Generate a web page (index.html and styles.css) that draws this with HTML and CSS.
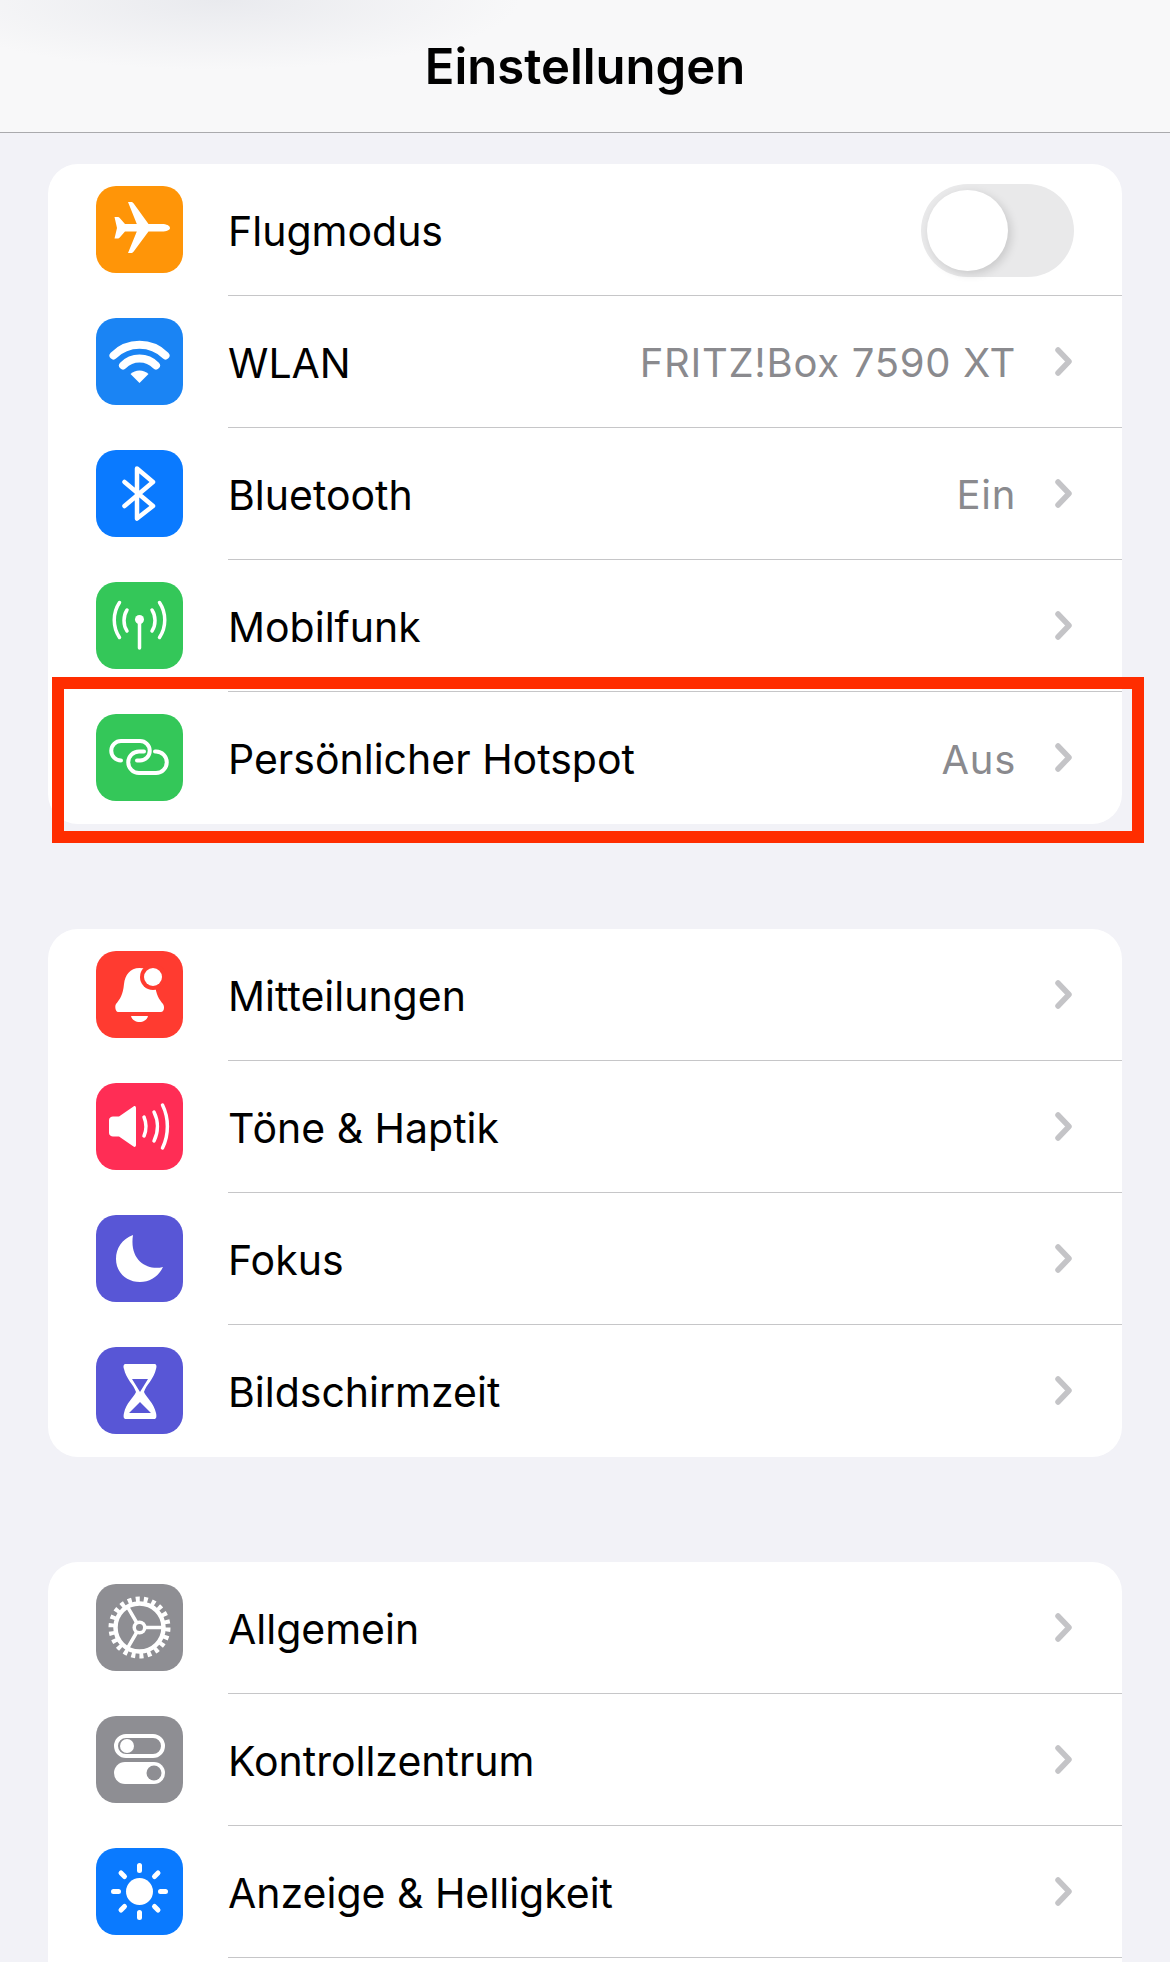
FILE: index.html
```html
<!DOCTYPE html>
<html lang="de">
<head>
  <meta charset="UTF-8">
  <title>Einstellungen</title>
  <meta name="viewport" content="width=device-width, initial-scale=1.0">
  <link rel="stylesheet" href="styles.css">
</head>
<body>

  <header class="nav-bar">
    <h1>Einstellungen</h1>
  </header>

  <main class="settings">

    <!-- Verbindungen -->
    <section class="card">
      <div class="row">
        <svg class="icon icon-orange" viewBox="0 0 87 87">
          <path class="fill" d="M74 42c0-2.400-3.600-4-8-4H52.500L37.500 17.200C36.800 16.300 36 16 35 16h-3l8.800 22H29l-5.500-6.300c-.4-.4-.8-.7-1.400-.7h-3.600l2.500 11-2.500 10.500h3.600c.6 0 1-.3 1.400-.7L29 45.500h11.800L32 67h3c1 0 1.800-.3 2.500-1.200L52.500 45.500H66c4.400 0 8-1.300 8-3.500z"/>
        </svg>
        <div class="row-body">
          <span class="label">Flugmodus</span>
          <span class="toggle"><span class="knob"></span></span>
        </div>
      </div>
      <div class="row">
        <svg class="icon icon-wifi" viewBox="0 0 87 87">
          <path class="line line-wifi" d="M17.500 37.500a37 37 0 0 1 52 0"/>
          <path class="line line-wifi" d="M27 47.500a23 23 0 0 1 33 0"/>
          <path class="fill" d="M43.500 65L34.500 56a13 13 0 0 1 18 0z"/>
        </svg>
        <div class="row-body">
          <span class="label">WLAN</span>
          <span class="value">FRITZ!Box 7590 XT</span>
          <svg class="chevron" viewBox="0 0 17 29"><path d="M3 3l11 11.500L3 26"/></svg>
        </div>
      </div>
      <div class="row">
        <svg class="icon icon-blue" viewBox="0 0 87 87">
          <path class="line line-bt" d="M28.500 32L57 56 41 68.500v-50L57 32 28.500 56"/>
        </svg>
        <div class="row-body">
          <span class="label">Bluetooth</span>
          <span class="value">Ein</span>
          <svg class="chevron" viewBox="0 0 17 29"><path d="M3 3l11 11.500L3 26"/></svg>
        </div>
      </div>
      <div class="row">
        <svg class="icon icon-green" viewBox="0 0 87 87">
          <path class="line line-thin" d="M23.500 20.500c-7 10.500-7 24.500 0 35M63.500 20.500c7 10.500 7 24.500 0 35"/>
          <path class="line line-thin" d="M31 28c-4 6-4 15 0 21M56 28c4 6 4 15 0 21"/>
          <circle class="fill" cx="43.500" cy="37.500" r="4.500"/>
          <path class="line line-thin" d="M43.500 38v28"/>
        </svg>
        <div class="row-body">
          <span class="label">Mobilfunk</span>
          <svg class="chevron" viewBox="0 0 17 29"><path d="M3 3l11 11.500L3 26"/></svg>
        </div>
      </div>
      <div class="row">
        <svg class="icon icon-green" viewBox="0 0 87 87">
          <path class="line line-link" d="M25 46.500a9.750 9.750 0 0 1 0-19.500H44a9.750 9.750 0 0 1 0 19.500h-3"/>
          <path class="line line-link" d="M59 37.500h1a10.750 10.750 0 0 1 0 21.500H43a10.750 10.750 0 0 1 0-21.500h5"/>
        </svg>
        <div class="row-body">
          <span class="label">Persönlicher Hotspot</span>
          <span class="value">Aus</span>
          <svg class="chevron" viewBox="0 0 17 29"><path d="M3 3l11 11.500L3 26"/></svg>
        </div>
        <div class="highlight"></div>
      </div>
    </section>

    <!-- Mitteilungen -->
    <section class="card">
      <div class="row">
        <svg class="icon icon-red" viewBox="0 0 87 87">
          <path class="fill" d="M43.500 17C34 17 29 24 28 33c-1 11-4 15-8 20-1.500 2-.5 8 2 8h43c3 0 4-5 2-8-4-5-7-9-8-20-1-9-6-16-15.500-16z"/>
          <path class="fill" d="M35 65h17c-1 4-5 6-8.500 6S36 69 35 65z"/>
          <circle class="dot-ring-red" cx="57" cy="26" r="13"/>
          <circle class="fill" cx="57" cy="26" r="9"/>
        </svg>
        <div class="row-body">
          <span class="label">Mitteilungen</span>
          <svg class="chevron" viewBox="0 0 17 29"><path d="M3 3l11 11.500L3 26"/></svg>
        </div>
      </div>
      <div class="row">
        <svg class="icon icon-pink" viewBox="0 0 87 87">
          <path class="fill" d="M37.500 23.500L23 33.500h-6c-2 0-4 1.500-4 3.500v13c0 2 2 3.500 4 3.500h6l14.500 10c1.500 1 2.500 0 2.500-1.500V25c0-1.500-1-2.500-2.500-1.500z"/>
          <path class="line line-thin" d="M48 34c2.500 6 2.500 13 0 19M58 29c4.500 9 4.500 20 0 29M66.500 22c6.500 13 6.500 30 0 43"/>
        </svg>
        <div class="row-body">
          <span class="label">Töne &amp; Haptik</span>
          <svg class="chevron" viewBox="0 0 17 29"><path d="M3 3l11 11.500L3 26"/></svg>
        </div>
      </div>
      <div class="row">
        <svg class="icon icon-indigo" viewBox="0 0 87 87">
          <path class="fill" d="M37 20C26 24 20 33 20 44c0 13 10 23 24 23 10 0 19-6 23-15-15 4-34-6-30-32z"/>
        </svg>
        <div class="row-body">
          <span class="label">Fokus</span>
          <svg class="chevron" viewBox="0 0 17 29"><path d="M3 3l11 11.500L3 26"/></svg>
        </div>
      </div>
      <div class="row">
        <svg class="icon icon-indigo" viewBox="0 0 87 87">
          <path class="fill" d="M30 17h28c2.500 0 3 2 2 5-2 10-10 16-12 23 2 5 10 11 12 21 1 4.500 0 6-2 6H30c-2 0-3-1.500-2-6 2-10 10-16 12-21-2-7-10-13-12-23-1-3-.5-5 2-5z"/>
          <path class="hole-indigo" d="M36 32h16l-8 13zM33 66l11-11 11 11z"/>
        </svg>
        <div class="row-body">
          <span class="label">Bildschirmzeit</span>
          <svg class="chevron" viewBox="0 0 17 29"><path d="M3 3l11 11.500L3 26"/></svg>
        </div>
      </div>
    </section>

    <!-- Allgemein -->
    <section class="card card-open">
      <div class="row">
        <svg class="icon icon-gray" viewBox="0 0 87 87">
          <circle class="gear-teeth" cx="43.500" cy="43.500" r="28"/>
          <circle class="gear-ring" cx="43.500" cy="43.500" r="24"/>
          <path class="line line-thin" d="M43.500 43.500H67M43.500 43.500L31.700 23.100M43.500 43.500L31.700 63.900"/>
          <circle class="fill" cx="43.500" cy="43.500" r="7"/>
          <circle class="hole-gray" cx="43.500" cy="43.500" r="3.500"/>
        </svg>
        <div class="row-body">
          <span class="label">Allgemein</span>
          <svg class="chevron" viewBox="0 0 17 29"><path d="M3 3l11 11.500L3 26"/></svg>
        </div>
      </div>
      <div class="row">
        <svg class="icon icon-gray" viewBox="0 0 87 87">
          <rect class="pill-outline" x="20" y="20" width="47" height="20" rx="10"/>
          <circle class="fill" cx="31" cy="30" r="7"/>
          <rect class="fill" x="18" y="46" width="51" height="22" rx="11"/>
          <circle class="hole-gray" cx="58" cy="57" r="7.500"/>
        </svg>
        <div class="row-body">
          <span class="label">Kontrollzentrum</span>
          <svg class="chevron" viewBox="0 0 17 29"><path d="M3 3l11 11.500L3 26"/></svg>
        </div>
      </div>
      <div class="row">
        <svg class="icon icon-azure" viewBox="0 0 87 87">
          <circle class="fill" cx="43.500" cy="43.500" r="13.500"/>
          <path class="line line-ray" d="M43.500 17.500v5M43.500 64.500v5M17.500 43.500h5M64.500 43.500h5M25 25l3.500 3.500M58.500 58.500L62 62M25 62l3.500-3.500M58.500 28.500L62 25"/>
        </svg>
        <div class="row-body">
          <span class="label">Anzeige &amp; Helligkeit</span>
          <svg class="chevron" viewBox="0 0 17 29"><path d="M3 3l11 11.500L3 26"/></svg>
        </div>
      </div>
    </section>

  </main>

</body>
</html>
```

FILE: styles.css
```css
body {
  font-family: 'Inter', 'Liberation Sans', sans-serif;
  background: #f2f2f7;
  margin: 0;
  height: 1962px;
  overflow: hidden;
}

/* Top bar */
.nav-bar {
  height: 132px;
  border-bottom: 1px solid #aaaaad;
  background: radial-gradient(ellipse 300px 70px at 220px 0, #e9eaee, rgba(233,234,238,0)), #f8f8f9;
  display: flex;
  align-items: center;
  justify-content: center;
}

.nav-bar h1 {
  margin: 0;
  font-size: 49px;
  font-weight: 600;
  color: #000;
}

/* Groups */
.settings {
  padding: 31px 48px 0;
}

.card {
  background: #fff;
  border-radius: 30px;
  margin-bottom: 105px;
}

.card-open {
  border-radius: 30px 30px 0 0;
  margin-bottom: 0;
  padding-bottom: 4px;
}

.row {
  position: relative;
  display: flex;
  align-items: center;
  height: 132px;
}

.row-body {
  flex: 1;
  height: 132px;
  box-sizing: border-box;
  margin-left: 45px;
  padding: 2px 50px 0 0;
  border-bottom: 1px solid #c6c6c8;
  display: flex;
  align-items: center;
}

.card > .row:last-of-type .row-body {
  border-bottom: none;
}

.card-open > .row:last-of-type .row-body {
  border-bottom: 1px solid #c6c6c8;
}

.label {
  flex: 1;
  font-size: 41px;
  color: #000;
}

.value {
  font-size: 40px;
  letter-spacing: 0.7px;
  color: #8a8a8e;
  margin-right: 39px;
}

/* Red annotation frame */
.highlight {
  position: absolute;
  top: -15px;
  bottom: -19px;
  left: 4px;
  right: -22px;
  border: 12px solid #ff2d00;
}

/* Icons */
.icon {
  flex: none;
  width: 87px;
  height: 87px;
  margin: -1px 0 0 48px;
  border-radius: 20px;
}

.icon-orange { background: #ff9508; }
.icon-wifi { background: #1a84f4; }
.icon-blue { background: #0a7aff; }
.icon-green { background: #34c759; }
.icon-red { background: #ff3b30; }
.icon-pink { background: #ff2d55; }
.icon-indigo { background: #5856d6; }
.icon-gray { background: #8e8e93; }
.icon-azure { background: #0a7aff; }

.fill { fill: #fff; }
.hole-indigo { fill: #5856d6; }
.hole-gray { fill: #8e8e93; }
.dot-ring-red { fill: #ff3b30; }

.line {
  fill: none;
  stroke: #fff;
  stroke-linecap: round;
  stroke-linejoin: round;
}

.line-wifi { stroke-width: 8; }
.line-bt { stroke-width: 4.5; }
.line-thin { stroke-width: 3.5; }
.line-link { stroke-width: 4; }
.line-ray { stroke-width: 5; }

.gear-teeth {
  fill: none;
  stroke: #fff;
  stroke-width: 6;
  stroke-dasharray: 4 4;
}

.gear-ring {
  fill: none;
  stroke: #fff;
  stroke-width: 4.5;
}

.pill-outline {
  fill: none;
  stroke: #fff;
  stroke-width: 4;
}

.chevron {
  flex: none;
  width: 17px;
  height: 29px;
  margin-top: -3px;
}

.chevron path {
  fill: none;
  stroke: #c4c4c7;
  stroke-width: 5.5;
  stroke-linecap: round;
  stroke-linejoin: round;
}

/* Switch */
.toggle {
  position: relative;
  flex: none;
  width: 153px;
  height: 93px;
  margin-right: -2px;
  border-radius: 47px;
  background: #e9e9ea;
}

.knob {
  position: absolute;
  top: 6px;
  left: 6px;
  width: 81px;
  height: 81px;
  border-radius: 50%;
  background: #fff;
  box-shadow: 3px 3px 10px rgba(0,0,0,0.14);
}
```
